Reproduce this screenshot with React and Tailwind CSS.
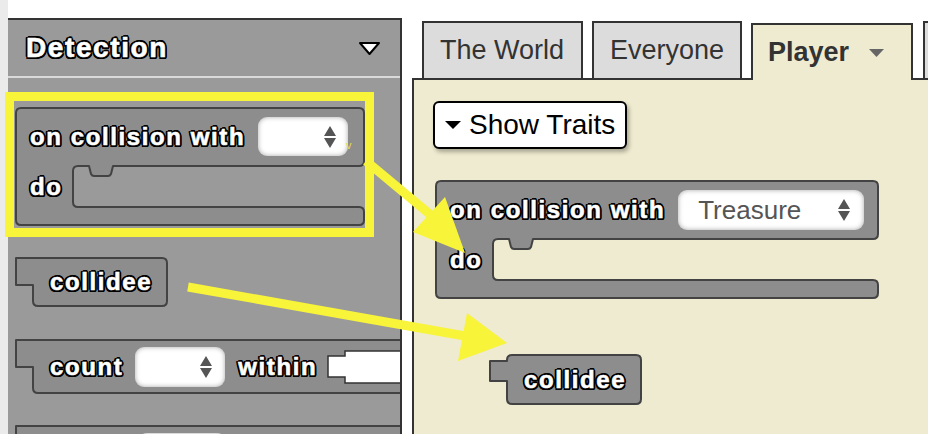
import React from "react";

const OUT =
  "text-white font-bold leading-none whitespace-nowrap [-webkit-text-stroke:0.6px_#fff] [text-shadow:-2px_0_0_#000,2px_0_0_#000,0_-2px_0_#000,0_2px_0_#000,-1.5px_-1.5px_0_#000,1.5px_-1.5px_0_#000,-1.5px_1.5px_0_#000,1.5px_1.5px_0_#000,-2px_-1px_0_#000,2px_1px_0_#000,-1px_2px_0_#000,1px_-2px_0_#000]";

const FILL = "#8d8d8d";
const STROKE = "#434343";

function UpDown() {
  return (
    <svg width="12" height="22" viewBox="0 0 12 22" className="shrink-0">
      <path d="M6 0 L12 10 H0 Z M0 12 H12 L6 22 Z" fill="#555" />
    </svg>
  );
}

function Dropdown({ className, children }) {
  return (
    <div
      className={
        "flex items-center shrink-0 rounded-[9px] bg-white shadow-[inset_0_0_5px_rgba(0,0,0,0.35)] " +
        className
      }
    >
      {children}
      <UpDown />
    </div>
  );
}

function CShape({ w, h, topH, botH, armW }) {
  const r = 5;
  const R = w - 1;
  const B = h - 1;
  const nx = armW + 16;
  const yb = h - botH;
  const d = [
    `M${1 + r},1`,
    `H${R - r}`,
    `Q${R},1 ${R},${1 + r}`,
    `V${topH - r}`,
    `Q${R},${topH} ${R - r},${topH}`,
    `H${nx + 24}`,
    `L${nx + 22},${topH + 8}`,
    `Q${nx + 21},${topH + 10} ${nx + 19},${topH + 10}`,
    `H${nx + 5}`,
    `Q${nx + 3},${topH + 10} ${nx + 2},${topH + 8}`,
    `L${nx},${topH}`,
    `H${armW + r}`,
    `Q${armW},${topH} ${armW},${topH + r}`,
    `V${yb - r}`,
    `Q${armW},${yb} ${armW + r},${yb}`,
    `H${R - r}`,
    `Q${R},${yb} ${R},${yb + r}`,
    `V${B - r}`,
    `Q${R},${B} ${R - r},${B}`,
    `H${1 + r}`,
    `Q1,${B} 1,${B - r}`,
    `V${1 + r}`,
    `Q1,1 ${1 + r},1`,
    "Z",
  ].join(" ");
  return (
    <svg className="absolute left-0 top-0" width={w} height={h} viewBox={`0 0 ${w} ${h}`}>
      <path d={d} fill={FILL} stroke={STROKE} strokeWidth="2" strokeLinejoin="round" />
    </svg>
  );
}

function VShape({ w, h, to, th }) {
  const r = 5;
  const R = w - 1;
  const B = h - 1;
  const tw = 18;
  const d =
    to === 0
      ? `M1,1 H${R - r} Q${R},1 ${R},${1 + r} V${B - r} Q${R},${B} ${R - r},${B} H${tw + r} Q${tw},${B} ${tw},${B - r} V${th} H1 Z`
      : `M${tw + r},1 H${R - r} Q${R},1 ${R},${1 + r} V${B - r} Q${R},${B} ${R - r},${B} H${tw + r} Q${tw},${B} ${tw},${B - r} V${to + th} H1 V${to} H${tw} V${1 + r} Q${tw},1 ${tw + r},1 Z`;
  return (
    <svg className="absolute left-0 top-0" width={w} height={h} viewBox={`0 0 ${w} ${h}`}>
      <path d={d} fill={FILL} stroke={STROKE} strokeWidth="2" strokeLinejoin="round" />
    </svg>
  );
}

function Socket() {
  return (
    <svg width="90" height="34" viewBox="0 0 90 34" className="shrink-0">
      <path d="M18,1 H95 V33 H18 V27 H1 V6 H18 Z" fill="#fff" stroke="#333" strokeWidth="1.5" />
    </svg>
  );
}

function CBlock({ w, className, dropdown }) {
  return (
    <div className={"relative shrink-0 h-[119px] " + className}>
      <CShape w={w} h={119} topH={59} botH={19} armW={58} />
      <div className="relative flex flex-col">
        <div className="h-[59px] flex items-center pl-[15px]">
          <span className={OUT + " text-[24px] tracking-[1.6px]"}>on collision with</span>
          {dropdown}
        </div>
        <div className="h-[41px] flex items-center pl-[15px]">
          <span className={OUT + " text-[24px] tracking-[1.6px]"}>do</span>
        </div>
      </div>
    </div>
  );
}

function Collidee({ className, to, th, h }) {
  return (
    <div className={"relative shrink-0 " + className}>
      <VShape w={153} h={h} to={to} th={th} />
      <div className="relative h-full flex items-center pl-[35px]">
        <span className={OUT + " text-[24px] tracking-[1.6px]"}>collidee</span>
      </div>
    </div>
  );
}

export default function App() {
  return (
    <div className="relative w-[928px] h-[434px] overflow-hidden bg-white flex font-['Liberation_Sans',Arial,sans-serif]">
      {/* left strip */}
      <div className="w-[8px] shrink-0 bg-[#ebebeb]" />

      {/* Left blocks panel */}
      <div className="mt-[18px] w-[394px] shrink-0 flex flex-col border-t-2 border-r-2 border-[#333] bg-[#9a9a9a] overflow-hidden">
        <div className="h-[58px] shrink-0 flex items-center justify-between pl-[18px] pr-[19px] border-b-2 border-[#dadada]">
          <span className={OUT + " text-[28px] tracking-[1.6px]"}>Detection</span>
          <svg width="23" height="15" viewBox="0 0 23 15">
            <polygon points="2,2 21,2 11.5,13" fill="#fff" stroke="#000" strokeWidth="2" strokeLinejoin="round" />
          </svg>
        </div>

        <div className="pt-[29px] pl-[7px] flex flex-col items-start gap-[31px]">
          <CBlock
            w={350}
            className="w-[350px]"
            dropdown={<Dropdown className="ml-[13px] w-[90px] h-[39px] justify-end pr-[12px]" />}
          />

          <Collidee className="w-[153px] h-[50px]" to={0} th={28} h={50} />

          <div className="relative shrink-0 w-[400px] h-[55px] mt-[1px]">
            <VShape w={400} h={55} to={0} th={28} />
            <div className="relative h-full flex items-center pl-[35px]">
              <span className={OUT + " text-[24px] tracking-[1.6px]"}>count</span>
              <Dropdown className="ml-[12px] w-[90px] h-[40px] justify-end pr-[13px]" />
              <span className={OUT + " ml-[13px] text-[24px] tracking-[1.6px]"}>within</span>
              <div className="ml-[10px] flex">
                <Socket />
              </div>
            </div>
          </div>

          {/* next block, only its top edge is in view */}
          <div className="relative shrink-0 w-[400px] h-[55px]">
            <VShape w={400} h={55} to={0} th={28} />
            <div className="relative h-full flex items-center pl-[123px]">
              <Dropdown className="w-[88px] h-[40px] justify-end pr-[13px]" />
              <div className="ml-[120px] flex">
                <Socket />
              </div>
            </div>
          </div>
        </div>
      </div>

      {/* Right workspace */}
      <div className="ml-[10px] flex-1 min-w-0 flex flex-col">
        <div className="mt-[21px] h-[57px] shrink-0 flex items-end gap-[9px] pl-[10px] text-[#333]">
          <div className="shrink-0 w-[161px] h-[57px] border-2 border-b-0 border-[#333] bg-[#dcdcdc] flex items-center pl-[16px] text-[27px] leading-none">
            The World
          </div>
          <div className="shrink-0 w-[150px] h-[57px] border-2 border-b-0 border-[#333] bg-[#dcdcdc] flex items-center pl-[16px] text-[27px] leading-none">
            Everyone
          </div>
          <div className="relative z-10 -mb-[2px] shrink-0 w-[162px] h-[57px] border-2 border-b-0 border-[#333] bg-[#efebd0] flex items-center pl-[15px] text-[27px] leading-none font-bold">
            Player
            <svg width="15" height="8" viewBox="0 0 15 8" className="ml-[20px]">
              <path d="M0 0 H15 L7.5 8 Z" fill="#666" />
            </svg>
          </div>
          <div className="shrink-0 ml-[1px] w-[60px] h-[57px] border-2 border-b-0 border-[#333] bg-[#dcdcdc]" />
        </div>

        <div className="flex-1 border-t-2 border-l-2 border-[#333] bg-[#efebd0] pt-[21px] pl-[19px] flex flex-col items-start">
          <div className="shrink-0 w-[194px] h-[48px] rounded-[6px] border-2 border-black bg-white shadow-[2px_3px_4px_rgba(0,0,0,0.3)] flex items-center pl-[10px]">
            <svg width="16" height="8" viewBox="0 0 16 8">
              <path d="M0 0 H16 L8 8 Z" fill="#000" />
            </svg>
            <span className="ml-[8px] text-[28px] leading-none text-black">Show Traits</span>
          </div>

          <CBlock
            w={444}
            className="w-[444px] ml-[2px] mt-[31px]"
            dropdown={
              <Dropdown className="ml-[13px] w-[186px] h-[40px] justify-between pl-[20px] pr-[14px]">
                <span className="text-[26px] leading-none text-[#555]">Treasure</span>
              </Dropdown>
            }
          />

          <Collidee className="w-[153px] h-[51px] ml-[56px] mt-[55px]" to={7} th={20} h={51} />
        </div>
      </div>

      {/* Annotation overlay */}
      <svg
        className="absolute left-0 top-0 pointer-events-none z-20"
        width="928"
        height="434"
        viewBox="0 0 928 434"
      >
        <rect x="9.5" y="96.5" width="360" height="136" fill="none" stroke="#f8f43a" strokeWidth="9" />
        <line x1="366" y1="161" x2="432" y2="216" stroke="#f8f43a" strokeWidth="9" />
        <polygon points="465,253 445,197 413,232" fill="#f8f43a" />
        <line x1="188" y1="287" x2="465" y2="336" stroke="#f8f43a" strokeWidth="9" />
        <polygon points="507,343 467,313 458,361" fill="#f8f43a" />
      </svg>
      <span className="absolute left-[346px] top-[140px] z-20 text-[11px] leading-none text-[#e6df48]">v</span>
    </div>
  );
}
